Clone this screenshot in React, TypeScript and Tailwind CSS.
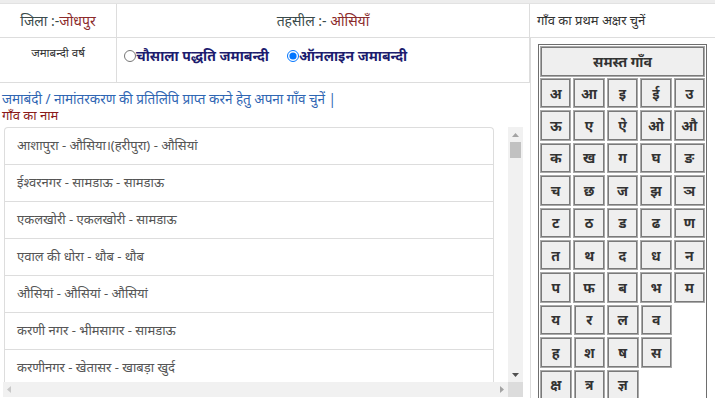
import React from "react";

const villages = [
  "आशापुरा - औसिया।(हरीपुरा) - औसियां",
  "ईश्वरनगर - सामडाऊ - सामडाऊ",
  "एकलखोरी - एकलखोरी - सामडाऊ",
  "एवाल की धोरा - थौब - थौब",
  "औसियां - औसियां - औसियां",
  "करणी नगर - भीमसागर - सामडाऊ",
  "करणीनगर - खेतासर - खाबड़ा खुर्द",
];

const letterRows = [
  ["अ", "आ", "इ", "ई", "उ"],
  ["ऊ", "ए", "ऐ", "ओ", "औ"],
  ["क", "ख", "ग", "घ", "ङ"],
  ["च", "छ", "ज", "झ", "ञ"],
  ["ट", "ठ", "ड", "ढ", "ण"],
  ["त", "थ", "द", "ध", "न"],
  ["प", "फ", "ब", "भ", "म"],
  ["य", "र", "ल", "व"],
  ["ह", "श", "ष", "स"],
  ["क्ष", "त्र", "ज्ञ"],
];

function LetterButton({ ch }: { ch: string }) {
  return (
    <div className="h-[30.4px] w-[31.5px] border border-[#a9a9a9] p-0">
      <button className="flex h-full w-full items-center justify-center border border-[#7a7a7a] bg-[#efefef] text-[14px] font-bold text-[#333]">
        {ch}
      </button>
    </div>
  );
}

export default function App() {
  return (
    <div
      className="h-[398px] w-[715px] overflow-hidden bg-white"
      style={{ fontFamily: '"Noto Sans", "Noto Sans Devanagari", sans-serif' }}
    >
      <div className="h-[3px] bg-[#ededed]" />
      <div className="grid grid-cols-[117px_413px_185px] grid-rows-[34px_45px_1fr] border-t border-[#e2e2e2]">
        {/* Row 1 */}
        <div className="flex items-center justify-center border-b border-r border-[#dddddd] text-[14px] text-[#3a4a4a]">
          <span>जिला :-</span>
          <span className="text-[#8b2a2a]">जोधपुर</span>
        </div>
        <div className="flex items-center justify-center border-b border-r border-[#dddddd] text-[14px] text-[#3a4a4a]">
          <span>तहसील :-&nbsp;</span>
          <span className="text-[#8b2a2a]">ओसियाँ</span>
        </div>
        <div className="flex items-center border-b border-[#dddddd] pl-[7px] text-[13px] text-[#333]">
          गाँव का प्रथम अक्षर चुनें
        </div>

        {/* Row 2 */}
        <div className="flex justify-center border-b border-r border-[#dddddd] pt-[6px] text-[11.5px] text-[#333]">
          जमाबन्दी वर्ष
        </div>
        <div className="flex items-start border-b border-r border-[#dddddd] pl-[7px] pt-[7px] text-[14px] font-bold text-[#1c1c6e]">
          <label className="flex items-center">
            <input type="radio" name="jb" className="m-0 h-[12px] w-[12px]" />
            <span>चौसाला पद्धति जमाबन्दी</span>
          </label>
          <label className="ml-[18px] flex items-center">
            <input type="radio" name="jb" defaultChecked className="m-0 h-[12px] w-[12px]" />
            <span>ऑनलाइन जमाबन्दी</span>
          </label>
        </div>

        {/* Right column: letters */}
        <div className="row-span-2 border-l border-[#dddddd] pl-[7px] pt-[6px]">
          <div className="w-[169px] border border-[#6e6e6e] p-[1px]">
            <div className="h-[31px] border border-[#a9a9a9]">
              <button className="flex h-full w-full items-center justify-center border border-[#7a7a7a] bg-[#efefef] text-[14px] font-bold text-[#333]">
                समस्त गाँव
              </button>
            </div>
            <div className="mt-[1px] flex flex-col gap-[2px]">
              {letterRows.map((row, i) => (
                <div key={i} className="flex gap-[2px]">
                  {row.map((ch) => (
                    <LetterButton key={ch} ch={ch} />
                  ))}
                </div>
              ))}
            </div>
          </div>
        </div>

        {/* Row 3 */}
        <div className="col-span-2 pt-[8px]">
          <div className="pl-[2px] text-[13.5px] leading-[16px] text-[#2f66b3]">
            जमाबंदी / नामांतरकरण की प्रतिलिपि प्राप्त करने हेतु अपना गाँव चुनें |
          </div>
          <div className="pl-[2px] pt-[1px] text-[13px] leading-[15px] text-[#8b1a1a]">गाँव का नाम</div>
          <div className="ml-[3px] mt-[4px] flex h-[270px] w-[520px] flex-col">
            <div className="flex h-[255px]">
              <div className="w-[505px] overflow-hidden pl-[1px]">
                <div className="w-[490px] rounded-t-[4px] border border-b-0 border-[#dddddd]">
                  {villages.map((v) => (
                    <div
                      key={v}
                      className="flex h-[37px] items-center border-b border-[#dddddd] pl-[12px] text-[13px] text-[#555]"
                    >
                      {v}
                    </div>
                  ))}
                </div>
              </div>
              <div className="flex w-[15px] flex-col bg-[#f1f1f1]">
                <div className="flex h-[15px] items-center justify-center">
                  <svg width="7" height="4" viewBox="0 0 7 4">
                    <path d="M0 4 L3.5 0 L7 4 Z" fill="#a3a3a3" />
                  </svg>
                </div>
                <div className="mx-[2px] h-[16px] bg-[#c1c1c1]" />
                <div className="flex-1" />
                <div className="flex h-[15px] items-center justify-center">
                  <svg width="7" height="4" viewBox="0 0 7 4">
                    <path d="M0 0 L7 0 L3.5 4 Z" fill="#505050" />
                  </svg>
                </div>
              </div>
            </div>
            <div className="flex h-[15px]">
              <div className="flex flex-1 items-center justify-between bg-[#f1f1f1] px-[4px]">
                <svg width="4" height="7" viewBox="0 0 4 7">
                  <path d="M4 0 L4 7 L0 3.5 Z" fill="#c8c8c8" />
                </svg>
                <svg width="4" height="7" viewBox="0 0 4 7">
                  <path d="M0 0 L0 7 L4 3.5 Z" fill="#a3a3a3" />
                </svg>
              </div>
              <div className="w-[15px] bg-[#dcdcdc]" />
            </div>
          </div>
        </div>
      </div>
    </div>
  );
}
